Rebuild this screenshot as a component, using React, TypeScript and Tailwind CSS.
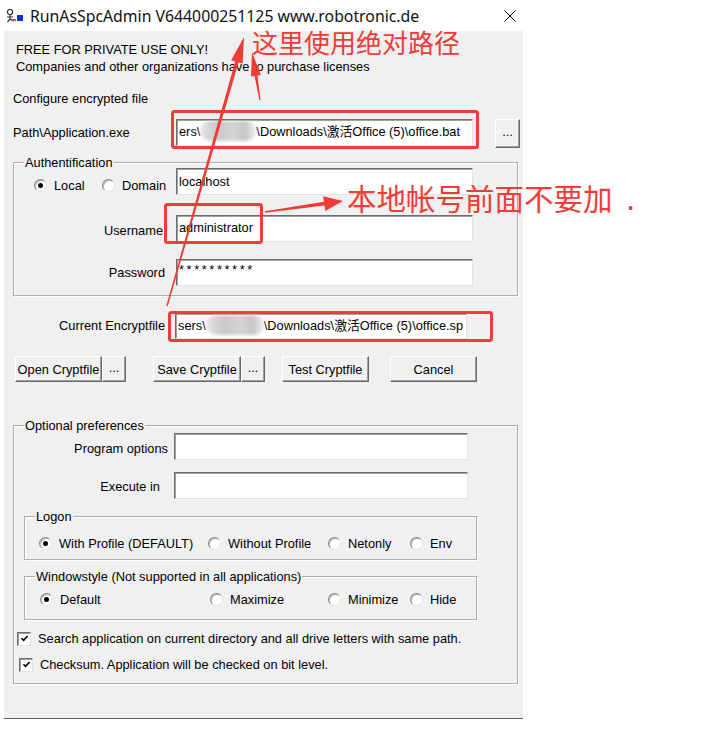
import React from 'react';

const ui = "font-['Liberation_Sans','Noto_Sans_CJK_SC',sans-serif] text-[12.8px] leading-[17px] text-black";
const red = '#f03c37';

function Field({ className = '', children }: { className?: string; children?: React.ReactNode }) {
  return (
    <div
      className={`flex items-start overflow-hidden whitespace-nowrap bg-white border border-t-[#6e6e6e] border-l-[#6e6e6e] border-r-[#e3e3e3] border-b-[#e3e3e3] shadow-[inset_1px_1px_0_#a0a0a0] pl-[2px] pt-[3px] ${className}`}
    >
      {children}
    </div>
  );
}

function Btn({ className = '', children }: { className?: string; children?: React.ReactNode }) {
  return (
    <div
      className={`flex items-center justify-center whitespace-nowrap bg-[#f0f0f0] border border-t-white border-l-white border-r-[#696969] border-b-[#696969] shadow-[inset_-1px_-1px_0_#a0a0a0] ${className}`}
    >
      {children}
    </div>
  );
}

function Radio({ checked }: { checked?: boolean }) {
  return (
    <span className="flex items-center justify-center w-[13px] h-[13px] shrink-0 rounded-full bg-white border border-t-[#8a8a8a] border-l-[#8a8a8a] border-r-[#e3e3e3] border-b-[#e3e3e3] shadow-[inset_1px_1px_0_#b4b4b4]">
      {checked && <span className="w-[5px] h-[5px] rounded-full bg-black" />}
    </span>
  );
}

function Check() {
  return (
    <span className="flex items-center justify-center w-[14px] h-[14px] shrink-0 bg-white border border-t-[#6e6e6e] border-l-[#6e6e6e] border-r-[#e3e3e3] border-b-[#e3e3e3] shadow-[inset_1px_1px_0_#a0a0a0]">
      <svg width="9" height="9" viewBox="0 0 9 9">
        <path d="M1.5 4.2 L3.6 6.4 L7.6 2" fill="none" stroke="#000" strokeWidth="1.6" />
      </svg>
    </span>
  );
}

function Group({ title, className = '', children }: { title: string; className?: string; children?: React.ReactNode }) {
  return (
    <div className={`relative border border-[#adadad] shadow-[1px_1px_0_#ffffff,inset_1px_1px_0_#ffffff] ${className}`}>
      <span className="absolute -top-[9px] left-[10px] px-[1px] bg-[#f0f0f0] leading-[17px] whitespace-nowrap">{title}</span>
      {children}
    </div>
  );
}

function Smudge({ w }: { w: number }) {
  return (
    <span
      className="inline-block shrink-0 h-[20px] -mt-[2px] rounded-full bg-[linear-gradient(90deg,#e6e6e6,#c9c9c9_30%,#d4d4d4_60%,#c6c6c6_80%,#eeeeee)] blur-[1.5px]"
      style={{ width: w }}
    />
  );
}

function RadioItem({ label, checked, className = '' }: { label: string; checked?: boolean; className?: string }) {
  return (
    <div className={`flex items-center gap-[7px] whitespace-nowrap ${className}`}>
      <Radio checked={checked} />
      <span>{label}</span>
    </div>
  );
}

function arrowPts(x1: number, y1: number, x2: number, y2: number, w1: number, w2: number, L: number, H: number) {
  const dx = x2 - x1;
  const dy = y2 - y1;
  const len = Math.hypot(dx, dy);
  const ux = dx / len;
  const uy = dy / len;
  const px = -uy;
  const py = ux;
  const bx = x2 - ux * L;
  const by = y2 - uy * L;
  const p = (x: number, y: number) => `${x.toFixed(1)},${y.toFixed(1)}`;
  return [
    p(x1 + (px * w1) / 2, y1 + (py * w1) / 2),
    p(bx + (px * w2) / 2, by + (py * w2) / 2),
    p(bx + px * H, by + py * H),
    p(x2, y2),
    p(bx - px * H, by - py * H),
    p(bx - (px * w2) / 2, by - (py * w2) / 2),
    p(x1 - (px * w1) / 2, y1 - (py * w1) / 2),
  ].join(' ');
}

export default function App() {
  return (
    <div className={`relative w-[702px] h-[731px] bg-white overflow-hidden ${ui}`}>
      {/* title bar */}
      <div className="flex items-center w-[524px] h-[31px] bg-white">
        <svg className="ml-[6px] shrink-0" width="18" height="14" viewBox="0 0 18 14">
          <circle cx="4" cy="3" r="2.6" fill="none" stroke="#333" strokeWidth="1.2" />
          <path d="M4 5.5 L4 10 M1 8 L7 8 M4 10 L1.5 13 M4 10 L8 12" stroke="#333" strokeWidth="1.2" fill="none" />
          <path d="M6 11 L10 11" stroke="#d22" strokeWidth="1.6" />
          <rect x="11" y="6" width="6" height="6" fill="#1030d0" />
        </svg>
        <span className="ml-[6px] font-['Noto_Sans',sans-serif] text-[15.8px] leading-[20px] text-[#111] whitespace-nowrap">
          RunAsSpcAdmin V644000251125 www.robotronic.de
        </span>
        <svg className="ml-auto mr-[8px] shrink-0" width="12" height="12" viewBox="0 0 12 12">
          <path d="M0.5 0.5 L11.5 11.5 M11.5 0.5 L0.5 11.5" stroke="#000" strokeWidth="1" />
        </svg>
      </div>

      {/* client area */}
      <div className="ml-[4px] w-[519px] h-[688px] bg-[#f0f0f0] border-b border-[#646464]">
        <div className="pl-[12px] pt-[10px]">
          <div>FREE FOR PRIVATE USE ONLY!</div>
          <div>Companies and other organizations have to purchase licenses</div>
        </div>
        <div className="mt-[15px] pl-[9px]">Configure encrypted file</div>

        <div className="mt-[12px] pl-[9px] flex items-start">
          <div className="w-[163px] mt-[5px]">Path\Application.exe</div>
          <Field className="w-[297px] h-[27px]">
            <span>ers\</span>
            <Smudge w={56} />
            <span>\Downloads\激活Office (5)\office.bat</span>
          </Field>
          <Btn className="ml-[22px] w-[25px] h-[29px] pb-[4px]">...</Btn>
        </div>

        <Group title="Authentification" className="mt-[14px] ml-[9px] w-[505px] h-[134px]">
          <div className="mt-[5px] flex items-start">
            <div className="w-[162px] mt-[9px] pl-[20px] flex items-center">
              <RadioItem label="Local" checked className="w-[68px]" />
              <RadioItem label="Domain" />
            </div>
            <Field className="w-[297px] h-[27px] pt-[4px]">
              <span>localhost</span>
            </Field>
          </div>
          <div className="mt-[20px] flex items-start">
            <div className="w-[162px] mt-[7px] pr-[13px] text-right">Username</div>
            <Field className="w-[297px] h-[27px]">
              <span>administrator</span>
            </Field>
          </div>
          <div className="mt-[17px] flex items-start">
            <div className="w-[162px] mt-[5px] pr-[11px] text-right">Password</div>
            <Field className="w-[297px] h-[27px]">
              <span className="tracking-[2.6px] -mt-[2px]">**********</span>
            </Field>
          </div>
        </Group>

        <div className="mt-[17px] pl-[9px] flex items-start">
          <div className="w-[162px] mt-[4px] pr-[10px] text-right">Current Encryptfile</div>
          <Field className="w-[292px] h-[26px]">
            <span>sers\</span>
            <Smudge w={58} />
            <span>\Downloads\激活Office (5)\office.sp</span>
          </Field>
        </div>

        <div className="mt-[17px] pl-[11px] flex items-start">
          <Btn className="w-[87px] h-[26px]">Open Cryptfile</Btn>
          <Btn className="w-[24px] h-[26px] pb-[4px]">...</Btn>
          <Btn className="ml-[27px] w-[88px] h-[26px]">Save Cryptfile</Btn>
          <Btn className="w-[24px] h-[26px] pb-[4px]">...</Btn>
          <Btn className="ml-[17px] w-[87px] h-[26px]">Test Cryptfile</Btn>
          <Btn className="ml-[21px] w-[87px] h-[26px]">Cancel</Btn>
        </div>

        <Group title="Optional preferences" className="mt-[43px] ml-[9px] w-[505px] h-[259px]">
          <div className="mt-[7px] flex items-start">
            <div className="w-[160px] mt-[7px] pr-[6px] text-right">Program options</div>
            <Field className="w-[294px] h-[27px]" />
          </div>
          <div className="mt-[12px] flex items-start">
            <div className="w-[160px] mt-[6px] pr-[14px] text-right">Execute in</div>
            <Field className="w-[294px] h-[27px]" />
          </div>

          <Group title="Logon" className="mt-[17px] ml-[10px] w-[453px] h-[44px]">
            <div className="mt-[18px] pl-[14px] flex items-center">
              <RadioItem label="With Profile (DEFAULT)" checked className="w-[169px]" />
              <RadioItem label="Without Profile" className="w-[120px]" />
              <RadioItem label="Netonly" className="w-[82px]" />
              <RadioItem label="Env" />
            </div>
          </Group>

          <Group title="Windowstyle (Not supported in all applications)" className="mt-[16px] ml-[10px] w-[453px] h-[44px]">
            <div className="mt-[14px] pl-[15px] flex items-center">
              <RadioItem label="Default" checked className="w-[170px]" />
              <RadioItem label="Maximize" className="w-[118px]" />
              <RadioItem label="Minimize" className="w-[82px]" />
              <RadioItem label="Hide" />
            </div>
          </Group>

          <div className="mt-[10px] pl-[3px] flex items-center gap-[7px] whitespace-nowrap">
            <Check />
            <span>Search application on current directory and all drive letters with same path.</span>
          </div>
          <div className="mt-[9px] pl-[5px] flex items-center gap-[7px] whitespace-nowrap">
            <Check />
            <span>Checksum. Application will be checked on bit level.</span>
          </div>
        </Group>
      </div>

      {/* annotations */}
      <svg className="absolute inset-0 pointer-events-none" width="702" height="731" viewBox="0 0 702 731">
        <rect x="172.5" y="111.5" width="305" height="36" rx="2" fill="none" stroke={red} strokeWidth="3" />
        <rect x="165.5" y="204.5" width="96" height="38" rx="2" fill="none" stroke={red} strokeWidth="3" />
        <rect x="169.5" y="312.5" width="322" height="28" rx="2" fill="none" stroke={red} strokeWidth="3" />
        <polygon points={arrowPts(167, 306, 244, 37, 1.5, 3.5, 26, 6)} fill={red} />
        <polygon points={arrowPts(260, 100, 252, 52, 1.2, 3, 24, 5)} fill={red} />
        <polygon points={arrowPts(265, 212, 343, 201, 1.5, 4, 19, 7.5)} fill={red} />
      </svg>
      <div className="absolute left-[252px] top-[27px] font-['Noto_Sans_CJK_SC',sans-serif] text-[26px] leading-[30px] text-[#f03c37] whitespace-nowrap">
        这里使用绝对路径
      </div>
      <div className="absolute left-[347px] top-[180px] font-['Noto_Sans_CJK_SC',sans-serif] text-[29.5px] leading-[34px] text-[#f03c37] whitespace-nowrap">
        本地帐号前面不要加<span className="ml-[14px]">.</span>
      </div>
    </div>
  );
}
